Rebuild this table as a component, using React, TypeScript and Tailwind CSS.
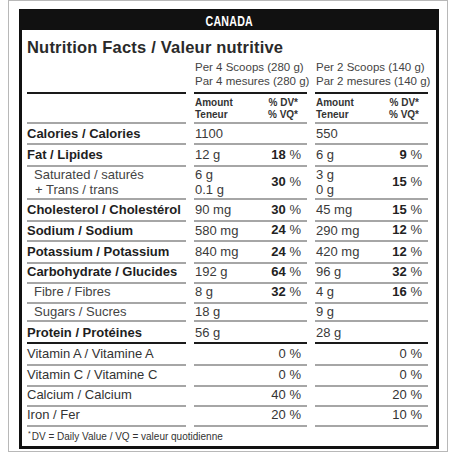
import React from "react";
import clsx from "clsx";

type Nutrient = {
	label: string;
	label2?: string;
	bold?: boolean;
	indent?: boolean;
	h: string;
	thick?: boolean;
	v1: string;
	v1b?: string;
	dv1?: string;
	v2: string;
	v2b?: string;
	dv2?: string;
};

const nutrients: Nutrient[] = [
	{label: "Calories / Calories", bold: true, h: "h-[21px]", v1: "1100", v2: "550"},
	{label: "Fat / Lipides", bold: true, h: "h-[20px]", v1: "12 g", dv1: "18", v2: "6 g", dv2: "9"},
	{label: "Saturated / saturés", label2: "+ Trans / trans", indent: true, h: "h-[35px]", v1: "6 g", v1b: "0.1 g", dv1: "30", v2: "3 g", v2b: "0 g", dv2: "15"},
	{label: "Cholesterol / Cholestérol", bold: true, h: "h-[20px]", v1: "90 mg", dv1: "30", v2: "45 mg", dv2: "15"},
	{label: "Sodium / Sodium", bold: true, h: "h-[22px]", v1: "580 mg", dv1: "24", v2: "290 mg", dv2: "12"},
	{label: "Potassium / Potassium", bold: true, h: "h-[20px]", v1: "840 mg", dv1: "24", v2: "420 mg", dv2: "12"},
	{label: "Carbohydrate / Glucides", bold: true, h: "h-[20px]", v1: "192 g", dv1: "64", v2: "96 g", dv2: "32"},
	{label: "Fibre / Fibres", indent: true, h: "h-[20px]", v1: "8 g", dv1: "32", v2: "4 g", dv2: "16"},
	{label: "Sugars / Sucres", indent: true, h: "h-[20px]", v1: "18 g", v2: "9 g"},
	{label: "Protein / Protéines", bold: true, h: "h-[22px]", thick: true, v1: "56 g", v2: "28 g"},
];

const vitamins = [
	{label: "Vitamin A / Vitamine A", h: "h-[21px]", dv1: "0", dv2: "0"},
	{label: "Vitamin C / Vitamine C", h: "h-[20px]", dv1: "0", dv2: "0"},
	{label: "Calcium / Calcium", h: "h-[20px]", dv1: "40", dv2: "20"},
	{label: "Iron / Fer", h: "h-[22px]", dv1: "20", dv2: "10"},
];

const Cell = ({children, thick, className}: {children?: React.ReactNode; thick?: boolean; className?: string}) => (
	<div className={clsx("flex items-center border-b-2", thick ? "border-[#1a1a1a]" : "border-[#a6a6a6]", className)}>
		{children}
	</div>
);

const Values = ({v, vb, dv, thick}: {v: string; vb?: string; dv?: string; thick?: boolean}) => (
	<Cell thick={thick} className="justify-between pl-[1px] pr-[6px] text-[13px] text-[#3a3a3a]">
		<div className="flex flex-col leading-[15px]">
			<span>{v}</span>
			{vb && <span>{vb}</span>}
		</div>
		{dv && (
			<span>
				<span className="font-bold text-[#222]">{dv}</span> %
			</span>
		)}
	</Cell>
);

const App = () => {
	return (
		<div className="w-[456px] h-[456px] bg-white overflow-hidden font-['Liberation_Sans',Arial,sans-serif]">
			<div className="ml-[8px] w-[440px] h-[452px] border border-[#b8b8b8] pt-[8px] pl-[10px]">
				<div className="w-[420px] h-[440px] border-[3px] border-[#111]">
					<div className="h-[18px] bg-[#111] flex items-center justify-center">
						<span className="inline-block scale-x-[0.76] text-white text-[14px] font-bold tracking-[0.3px]">
							CANADA
						</span>
					</div>

					<div className="pl-[5px]">
						<div className="mt-[7px] text-[16.5px] leading-[20px] font-bold text-[#2a2a2a] tracking-[0.2px]">
							Nutrition Facts / Valeur nutritive
						</div>

						<div className="mt-[3px] grid grid-cols-[159px_113px_113px] gap-x-[8px]">
							<Cell thick className="h-[34px]" />
							<Cell thick className="h-[34px] pb-[4px] pl-[1px] text-[11.5px] leading-[14px] text-[#444] whitespace-nowrap">
								<div className="flex flex-col">
									<span>Per 4 Scoops (280 g)</span>
									<span>Par 4 mesures (280 g)</span>
								</div>
							</Cell>
							<Cell thick className="h-[34px] pb-[4px] pl-[1px] text-[11.5px] leading-[14px] text-[#444] whitespace-nowrap">
								<div className="flex flex-col">
									<span>Per 2 Scoops (140 g)</span>
									<span>Par 2 mesures (140 g)</span>
								</div>
							</Cell>
						</div>

						<div className="grid grid-cols-[159px_113px_113px] gap-x-[8px]">
							<Cell className="h-[30px]" />
							{[0, 1].map((i) => (
								<Cell key={i} className="h-[30px] pt-[1px] justify-between pl-[1px] pr-[9px] text-[10px] leading-[12px] font-bold text-[#333]">
									<div className="flex flex-col">
										<span>Amount</span>
										<span>Teneur</span>
									</div>
									<div className="flex flex-col items-end">
										<span>% DV*</span>
										<span>% VQ*</span>
									</div>
								</Cell>
							))}
						</div>

						{nutrients.map((n) => (
							<div key={n.label} className={clsx("grid grid-cols-[159px_113px_113px] gap-x-[8px]", n.h)}>
								<Cell
									thick={n.thick}
									className={clsx(
										"text-[13px] leading-[15px] whitespace-nowrap",
										n.bold ? "font-bold text-[#1e1e1e]" : "text-[#444]",
										n.indent && "pl-[7px]"
									)}
								>
									<div className="flex flex-col">
										<span>{n.label}</span>
										{n.label2 && <span className="pl-[1px]">{n.label2}</span>}
									</div>
								</Cell>
								<Values v={n.v1} vb={n.v1b} dv={n.dv1} thick={n.thick} />
								<Values v={n.v2} vb={n.v2b} dv={n.dv2} thick={n.thick} />
							</div>
						))}

						{vitamins.map((v) => (
							<div key={v.label} className={clsx("grid grid-cols-[159px_113px_113px] gap-x-[8px] text-[13px] text-[#333]", v.h)}>
								<Cell>{v.label}</Cell>
								<Cell className="justify-end pr-[6px]">{v.dv1} %</Cell>
								<Cell className="justify-end pr-[6px]">{v.dv2} %</Cell>
							</div>
						))}

						<div className="h-[19px] flex items-center text-[10px] text-[#333] pl-[1px]">
							<span className="text-[7px] -translate-y-[2px] mr-[1px]">*</span>
							DV = Daily Value / VQ = valeur quotidienne
						</div>
					</div>
				</div>
			</div>
		</div>
	);
};

export default App;
